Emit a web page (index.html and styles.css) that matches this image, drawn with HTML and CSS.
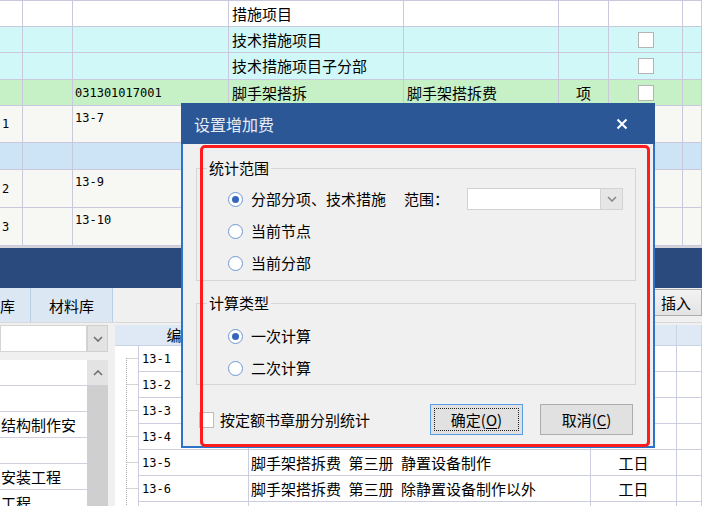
FILE: index.html
```html
<!DOCTYPE html>
<html lang="zh-CN">
<head>
<meta charset="utf-8">
<title>设置增加费</title>
<link rel="stylesheet" href="styles.css">
</head>
<body>
<div class="app">
  <div class="top-grid">
    <div class="trow h26 bg-white">
      <div></div><div></div><div></div><div>措施项目</div><div></div><div></div><div></div><div></div>
    </div>
    <div class="trow h26 bg-cyan">
      <div></div><div></div><div></div><div>技术措施项目</div><div></div><div></div><div class="center"><span class="tcb"></span></div><div></div>
    </div>
    <div class="trow h27 bg-cyan">
      <div></div><div></div><div></div><div>技术措施项目子分部</div><div></div><div></div><div class="center"><span class="tcb"></span></div><div></div>
    </div>
    <div class="trow h26 bg-green">
      <div></div><div></div><div class="code">031301017001</div><div>脚手架搭拆</div><div>脚手架搭拆费</div><div class="center">项</div><div class="center"><span class="tcb"></span></div><div></div>
    </div>
    <div class="trow h37 bg-off">
      <div class="num">1</div><div></div><div class="code top">13-7</div><div></div><div></div><div></div><div></div><div></div>
    </div>
    <div class="trow h27 bg-blue">
      <div></div><div></div><div></div><div></div><div></div><div></div><div></div><div></div>
    </div>
    <div class="trow h38 bg-off">
      <div class="num">2</div><div></div><div class="code top">13-9</div><div></div><div></div><div></div><div></div><div></div>
    </div>
    <div class="trow h38 bg-off">
      <div class="num">3</div><div></div><div class="code top">13-10</div><div></div><div></div><div></div><div></div><div></div>
    </div>
  </div>
  <div class="sep"></div>
  <div class="band"></div>
  <div class="tabs">
    <div class="tab tab1">库</div>
    <div class="tab tab2">材料库</div>
    <div class="spacer"></div>
    <button class="insert-btn">插入</button>
  </div>
  <div class="lower">
    <div class="lpanel">
      <div class="lcombo">
        <div class="lcombo-input"></div>
        <div class="lcombo-btn"><svg width="10" height="6" viewBox="0 0 10 6"><polyline points="1,1 5,5 9,1" fill="none" stroke="#707070" stroke-width="1.6"/></svg></div>
      </div>
      <div class="lbody">
        <div class="llist">
          <div class="lrow"></div>
          <div class="lrow"></div>
          <div class="lrow">结构制作安</div>
          <div class="lrow"></div>
          <div class="lrow">安装工程</div>
          <div class="lrow">工程</div>
        </div>
        <div class="lscroll">
          <div class="lscroll-up"><svg width="10" height="6" viewBox="0 0 10 6"><polyline points="1,5 5,1 9,5" fill="none" stroke="#707070" stroke-width="1.6"/></svg></div>
        </div>
      </div>
    </div>
    <div class="rpanel">
      <div class="rhead">
        <div class="hc">编码</div><div class="hc"></div><div class="hc"></div><div class="hc"></div>
      </div>
      <div class="rrow">
        <div class="tree"><svg width="23" height="26" viewBox="0 0 23 26"><path d="M11.5 12V26M11.5 12.5H23" stroke="#a8a8a8" stroke-dasharray="1 1"/></svg></div>
        <div class="rc code">13-1</div><div class="rc"></div><div class="rc center"></div><div class="rc"></div>
      </div>
      <div class="rrow">
        <div class="tree"><svg width="23" height="26" viewBox="0 0 23 26"><path d="M11.5 0V26M11.5 12.5H23" stroke="#a8a8a8" stroke-dasharray="1 1"/></svg></div>
        <div class="rc code">13-2</div><div class="rc"></div><div class="rc center"></div><div class="rc"></div>
      </div>
      <div class="rrow">
        <div class="tree"><svg width="23" height="26" viewBox="0 0 23 26"><path d="M11.5 0V26M11.5 12.5H23" stroke="#a8a8a8" stroke-dasharray="1 1"/></svg></div>
        <div class="rc code">13-3</div><div class="rc"></div><div class="rc center"></div><div class="rc"></div>
      </div>
      <div class="rrow">
        <div class="tree"><svg width="23" height="26" viewBox="0 0 23 26"><path d="M11.5 0V26M11.5 12.5H23" stroke="#a8a8a8" stroke-dasharray="1 1"/></svg></div>
        <div class="rc code">13-4</div><div class="rc"></div><div class="rc center"></div><div class="rc"></div>
      </div>
      <div class="rrow">
        <div class="tree"><svg width="23" height="26" viewBox="0 0 23 26"><path d="M11.5 0V26M11.5 12.5H23" stroke="#a8a8a8" stroke-dasharray="1 1"/></svg></div>
        <div class="rc code">13-5</div><div class="rc">脚手架搭拆费&ensp;第三册&ensp;静置设备制作</div><div class="rc center">工日</div><div class="rc"></div>
      </div>
      <div class="rrow">
        <div class="tree"><svg width="23" height="26" viewBox="0 0 23 26"><path d="M11.5 0V26M11.5 12.5H23" stroke="#a8a8a8" stroke-dasharray="1 1"/></svg></div>
        <div class="rc code">13-6</div><div class="rc">脚手架搭拆费&ensp;第三册&ensp;除静置设备制作以外</div><div class="rc center">工日</div><div class="rc"></div>
      </div>
      <div class="rrow">
        <div class="tree"><svg width="23" height="26" viewBox="0 0 23 26"><path d="M11.5 0V26" stroke="#a8a8a8" stroke-dasharray="1 1"/></svg></div>
        <div class="rc code"></div><div class="rc"></div><div class="rc center"></div><div class="rc"></div>
      </div>
    </div>
  </div>

  <div class="dialog">
    <div class="dlg-title">
      <span class="dlg-caption">设置增加费</span>
      <svg class="dlg-close" width="12" height="12" viewBox="0 0 12 12"><path d="M1.5 1.5L10.5 10.5M10.5 1.5L1.5 10.5" stroke="#ffffff" stroke-width="2"/></svg>
    </div>
    <div class="dlg-body">
      <fieldset class="group g1">
        <legend>统计范围</legend>
        <div class="opt">
          <span class="opt-main"><span class="radio on"></span><span class="opt-text">分部分项、技术措施</span></span>
          <span class="range-label">范围：</span>
          <span class="combo"><span class="combo-input"></span><span class="combo-btn"><svg width="10" height="6" viewBox="0 0 10 6"><polyline points="1,1 5,5 9,1" fill="none" stroke="#8a8a8a" stroke-width="1.6"/></svg></span></span>
        </div>
        <div class="opt"><span class="radio"></span><span class="opt-text">当前节点</span></div>
        <div class="opt"><span class="radio"></span><span class="opt-text">当前分部</span></div>
      </fieldset>
      <fieldset class="group g2">
        <legend>计算类型</legend>
        <div class="opt"><span class="radio on"></span><span class="opt-text">一次计算</span></div>
        <div class="opt"><span class="radio"></span><span class="opt-text">二次计算</span></div>
      </fieldset>
      <div class="dlg-foot">
        <span class="check"></span><span class="check-label">按定额书章册分别统计</span>
        <span class="btns">
          <button class="btn focused">确定(<u>O</u>)</button>
          <button class="btn">取消(<u>C</u>)</button>
        </span>
      </div>
    </div>
    <div class="annot"></div>
  </div>
</div>
</body>
</html>
```
FILE: styles.css
```css
* { box-sizing: border-box; }
html, body { margin: 0; padding: 0; }
body {
  width: 702px;
  height: 506px;
  overflow: hidden;
  background: #f0f0f0;
  font-family: "Noto Sans CJK SC", "Noto Sans", sans-serif;
  font-size: 15px;
  color: #000;
}
.app {
  position: relative;
  width: 702px;
  height: 506px;
  overflow: hidden;
  display: flex;
  flex-direction: column;
}

/* top grid */
.top-grid { border-top: 1px solid #c9c8dc; flex: none; }
.trow {
  display: grid;
  grid-template-columns: 23px 50px 156px 175px 155px 50px 74px 1fr;
}
.trow > div {
  border-right: 1px solid #c9c8dc;
  border-bottom: 1px solid #c9c8dc;
  display: flex;
  align-items: center;
  padding-left: 3px;
  line-height: 18px;
  white-space: nowrap;
  overflow: hidden;
}
.h26 { height: 26px; }
.h27 { height: 27px; }
.h37 { height: 37px; }
.h38 { height: 38px; }
.bg-white { background: #ffffff; }
.bg-cyan { background: #d0f8f8; }
.bg-green { background: #c6f0c6; }
.bg-off { background: #f7f7f3; }
.bg-blue { background: #cde4f7; }
.trow > .num, .trow > .code {
  font-family: "DejaVu Sans Mono", monospace;
  font-size: 12px;
  padding-left: 2px;
}
.trow > .top { align-items: flex-start; padding-top: 3px; }
.trow > .center { justify-content: center; padding-left: 0; }
.tcb {
  width: 16px;
  height: 16px;
  background: #fff;
  border: 1px solid #b4b4b4;
}

.sep { height: 2px; background: #d3d3db; flex: none; }
.band { height: 40px; background: #2a4a7e; flex: none; }

/* tabs */
.tabs {
  height: 35px;
  flex: none;
  display: flex;
  background: #f0f0f0;
  border-bottom: 1px solid #d9d9d9;
}
.tab {
  background: #dce7f4;
  border-right: 1px solid #b8cde6;
  display: flex;
  align-items: center;
  white-space: nowrap;
}
.tab1 { width: 31px; }
.tab2 { width: 82px; justify-content: center; }
.spacer { flex: 1; }
.insert-btn {
  margin-top: 1px;
  height: 27px;
  width: 60px;
  flex: none;
  padding: 0 0 0 18px;
  border: 1px solid #adadad;
  background: linear-gradient(#f3f3f3, #e3e3e3);
  font: inherit;
  text-align: left;
  color: #000;
}

/* lower area */
.lower { flex: 1; display: flex; min-height: 0; }
.lpanel { width: 108px; flex: none; padding-top: 2px; display: flex; flex-direction: column; }
.lcombo { height: 27px; display: flex; flex: none; }
.lcombo-input { width: 87px; background: #fff; border: 1px solid #d5d5d5; }
.lcombo-btn {
  width: 21px;
  background: #e3e3e3;
  border: 1px solid #d0d0d0;
  display: flex;
  align-items: center;
  justify-content: center;
}
.lbody { margin-top: 8px; flex: 1; display: flex; min-height: 0; }
.llist { width: 87px; background: #fff; overflow: hidden; }
.lrow {
  height: 26px;
  border-bottom: 1px solid #cfcfe0;
  display: flex;
  align-items: center;
  white-space: nowrap;
  padding-left: 1px;
  line-height: 18px;
}
.lscroll { width: 21px; background: #cfcfcf; }
.lscroll-up {
  height: 25px;
  background: #e3e3e3;
  display: flex;
  align-items: center;
  justify-content: center;
}

.rpanel {
  flex: 1;
  margin-left: 7px;
  padding-top: 2px;
  display: flex;
  flex-direction: column;
  overflow: hidden;
}
.rhead {
  height: 21px;
  flex: none;
  background: #dfe8f5;
  display: grid;
  grid-template-columns: 134px 342px 86px 1fr;
  border-bottom: 1px solid #c8d3e4;
}
.hc {
  border-right: 1px solid #c8d3e4;
  display: flex;
  align-items: center;
  justify-content: center;
  line-height: 18px;
  white-space: nowrap;
}
.rrow {
  display: grid;
  grid-template-columns: 23px 111px 342px 86px 1fr;
  height: 26px;
  flex: none;
  background: #fff;
}
.tree { display: flex; }
.rc {
  border-right: 1px solid #cdcde0;
  border-bottom: 1px solid #cdcde0;
  display: flex;
  align-items: center;
  padding-left: 2px;
  white-space: nowrap;
  overflow: hidden;
  line-height: 18px;
}
.rc.code {
  border-left: 1px solid #cdcde0;
  font-family: "DejaVu Sans Mono", monospace;
  font-size: 12px;
  padding-left: 3px;
}
.rc.center { justify-content: center; padding-left: 0; }

/* dialog */
.dialog {
  position: absolute;
  left: 181px;
  top: 103px;
  width: 474px;
  height: 345px;
  background: #f0f0f0;
  border: 2px solid #2b72c8;
  border-top: 0;
  display: flex;
  flex-direction: column;
}
.dlg-title {
  height: 41px;
  flex: none;
  background: #2b5797;
  margin: 0 -2px;
  padding: 0 27px 0 13px;
  display: flex;
  align-items: center;
  justify-content: space-between;
}
.dlg-caption { color: #e6ecf5; font-size: 16px; line-height: 20px; }
.dlg-body {
  flex: 1;
  padding: 14px 17px 0 13px;
  display: flex;
  flex-direction: column;
}
.group {
  margin: 0;
  padding: 0;
  border: 1px solid #d6d6d6;
  min-width: 0;
}
.group legend {
  margin-left: 10px;
  padding: 0 2px;
  line-height: 20px;
  font-size: 15px;
}
.g1 { padding-top: 5px; padding-bottom: 1px; }
.g2 { margin-top: 12px; padding-top: 7px; }
.opt {
  height: 32px;
  display: flex;
  align-items: center;
  padding-left: 31px;
  line-height: 20px;
  white-space: nowrap;
}
.opt-main { width: 176px; display: flex; align-items: center; flex: none; }
.radio {
  width: 15px;
  height: 15px;
  border-radius: 50%;
  border: 1px solid #6f98d2;
  background: #fff;
  flex: none;
  display: flex;
  align-items: center;
  justify-content: center;
}
.radio.on::after {
  content: "";
  width: 7px;
  height: 7px;
  border-radius: 50%;
  background: #3566bd;
}
.opt-text { margin-left: 8px; }
.range-label { width: 63px; flex: none; }
.combo {
  width: 156px;
  height: 22px;
  display: flex;
  border: 1px solid #d3d3d3;
  background: #fff;
  flex: none;
}
.combo-input { flex: 1; }
.combo-btn {
  width: 22px;
  background: #e6e6e6;
  border-left: 1px solid #d3d3d3;
  display: flex;
  align-items: center;
  justify-content: center;
}
.dlg-foot {
  margin-top: 19px;
  height: 31px;
  display: flex;
  align-items: center;
  line-height: 20px;
}
.check {
  width: 15px;
  height: 16px;
  margin-left: 3px;
  background: #fff;
  border: 1px solid #bdbdbd;
  flex: none;
}
.check-label { margin-left: 6px; white-space: nowrap; }
.btns { margin-left: auto; margin-right: 3px; display: flex; gap: 17px; }
.btn {
  width: 93px;
  height: 31px;
  padding: 0;
  border: 1px solid #adadad;
  background: #e1e1e1;
  font: inherit;
  color: #000;
}
.btn u { text-underline-offset: 2px; }
.btn.focused {
  border-color: #5a9de6;
  outline: 1px dotted #222;
  outline-offset: -5px;
}
.annot {
  position: absolute;
  left: 17px;
  top: 42px;
  width: 450px;
  height: 302px;
  border: 3px solid #ff1c1c;
  border-radius: 5px;
}
```
